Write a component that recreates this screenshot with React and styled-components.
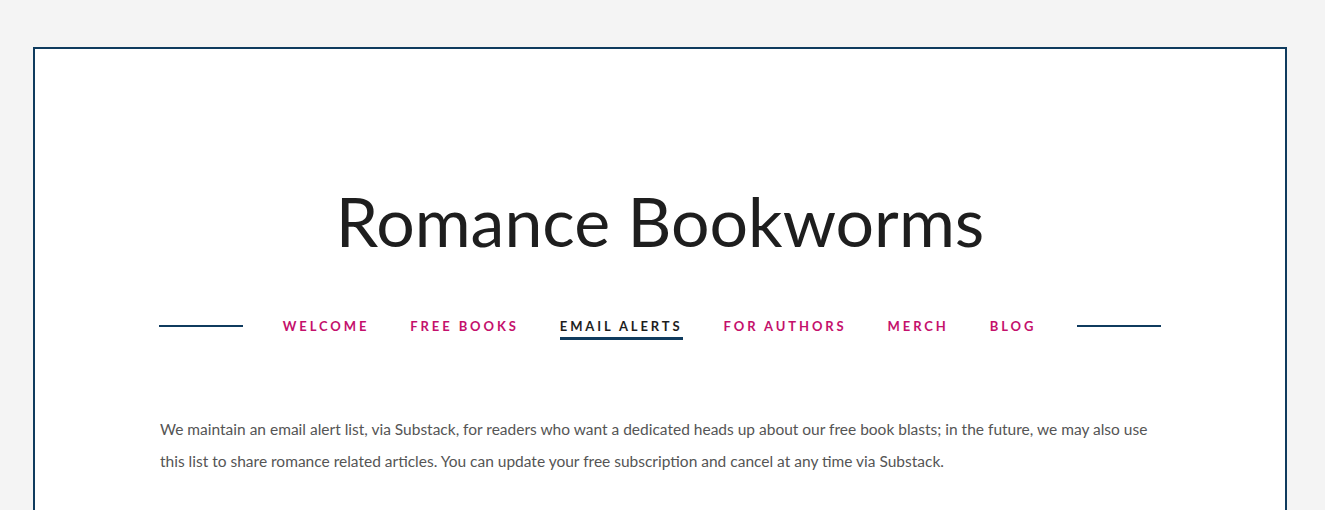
import React from 'react';
import styled, { createGlobalStyle } from 'styled-components';

const Global = createGlobalStyle`
  html, body {
    margin: 0;
    padding: 0;
    background: #f4f4f4;
  }
  body {
    font-family: Lato, "Liberation Sans", sans-serif;
  }
`;

const Page = styled.div`
  padding: 47px 38px 0 33px;
  height: 510px;
  box-sizing: border-box;
  overflow: hidden;
`;

const Frame = styled.div`
  background: #fff;
  border: 2px solid #0f3b5e;
  border-bottom: none;
  height: 470px;
  box-sizing: border-box;
  padding: 0 125px;
`;

const Title = styled.h1`
  margin: 0;
  padding-top: 134px;
  text-align: center;
  font-family: Lato, "Liberation Sans", sans-serif;
  font-weight: 400;
  font-size: 68px;
  line-height: 76px;
  letter-spacing: 0;
  color: #1e1e1e;
`;

const Nav = styled.nav`
  display: flex;
  align-items: center;
  justify-content: center;
  margin-top: 52px;
  height: 30px;
`;

const Rule = styled.span`
  display: block;
  flex-shrink: 0;
  width: 84px;
  height: 2px;
  background: #0f3b5e;
`;

const Links = styled.ul`
  display: flex;
  gap: 41px;
  list-style: none;
  margin: 0 41px 0 40px;
  padding: 0;
`;

const Link = styled.li`
  position: relative;
  white-space: nowrap;
  font-family: Lato, "Liberation Sans", sans-serif;
  font-weight: 700;
  font-size: 13px;
  line-height: 16px;
  letter-spacing: 2.9px;
  color: ${p => (p.$active ? '#1e1e1e' : '#c4106c')};
  ${p =>
    p.$active &&
    `
    &::after {
      content: '';
      position: absolute;
      left: 0;
      right: 0;
      bottom: -6px;
      height: 3px;
      background: #0f3b5e;
    }
  `}
`;

const Body = styled.p`
  margin: 72px 0 0;
  font-family: Lato, "Liberation Sans", sans-serif;
  font-size: 15.5px;
  line-height: 32px;
  color: #555;
`;

const items = ['WELCOME', 'FREE BOOKS', 'EMAIL ALERTS', 'FOR AUTHORS', 'MERCH', 'BLOG'];

export default function App() {
  return (
    <>
      <Global />
      <Page>
        <Frame>
          <Title>Romance Bookworms</Title>
          <Nav>
            <Rule />
            <Links>
              {items.map(i => (
                <Link key={i} $active={i === 'EMAIL ALERTS'}>{i}</Link>
              ))}
            </Links>
            <Rule />
          </Nav>
          <Body>
            We maintain an email alert list, via Substack, for readers who want a dedicated heads up about our free book blasts; in the future, we may also use this list to share romance related articles. You can update your free subscription and cancel at any time via Substack.
          </Body>
        </Frame>
      </Page>
    </>
  );
}
